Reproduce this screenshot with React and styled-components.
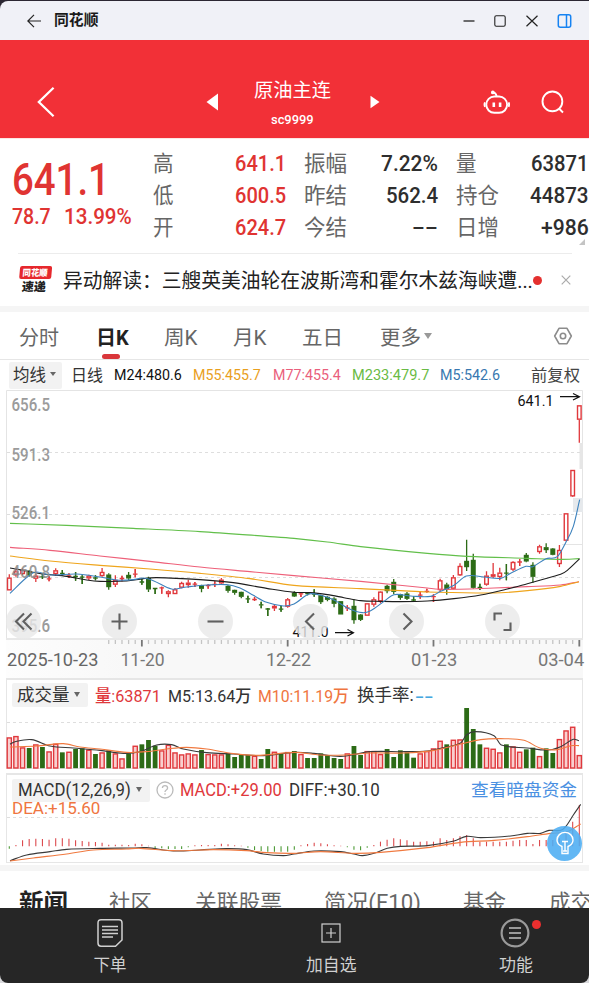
import React, { useLayoutEffect, useRef, useState } from "react";
import styled, { createGlobalStyle } from "styled-components";

const Global = createGlobalStyle`
  * { box-sizing: border-box; }
  body { margin: 0; background: #d9d9dc; overflow: hidden; }
`;

const FONT = '"Roboto", "Noto Sans CJK SC", sans-serif';

/* ---------- text that keeps a fixed advance width ---------- */

const LabelBox = styled.span`
  display: block;
  flex: none;
  width: ${(p) => p.$w}px;
  height: ${(p) => p.$size + 6}px;
  line-height: ${(p) => p.$size + 6}px;
  padding-top: 1px;
  margin-left: ${(p) => p.$ml || 0}px;
  font-family: ${FONT};
  font-size: ${(p) => p.$size}px;
  font-weight: ${(p) => p.$weight || 400};
  color: ${(p) => p.$color || "#333"};
  white-space: nowrap;
`;
const LabelInner = styled.span`
  display: inline-block;
  transform-origin: 0 50%;
`;

function Label({ w, size, weight, color, ml, children }) {
  const ref = useRef(null);
  const [scale, setScale] = useState(1);
  useLayoutEffect(() => {
    const n = ref.current.offsetWidth;
    if (n) setScale(w / n);
  }, [w, children]);
  return (
    <LabelBox $w={w} $size={size} $weight={weight} $color={color} $ml={ml}>
      <LabelInner ref={ref} style={{ transform: `scaleX(${scale})` }}>{children}</LabelInner>
    </LabelBox>
  );
}

/* ---------- window and header ---------- */

const Screen = styled.div`
  width: 589px;
  height: 983px;
  display: flex;
  flex-direction: column;
  background: #fff;
  overflow: hidden;
  border-radius: 0 0 8px 8px;
`;
const Desktop = styled.div`
  background: #2b2733;
  height: 40px;
  padding-top: 1px;
  flex: none;
`;
const TitleBar = styled.div`
  height: 39px;
  display: flex;
  align-items: center;
  background: #f0f1f7;
  border-radius: 8px 0 0 0;
  padding: 0 17px 0 27px;
`;
const WindowButtons = styled.div`
  margin-left: auto;
  display: flex;
  align-items: center;
  gap: 18px;
`;
const Header = styled.header`
  height: 98px;
  flex: none;
  display: flex;
  align-items: center;
  background: #f23037;
  padding: 25px 24px 0 36px;
`;
const NameBlock = styled.div`
  display: flex;
  flex-direction: column;
  align-items: center;
  gap: 7px;
  width: 79px;
  margin: 0 38px 0 36px;
  padding-top: 3px;
`;
const IconSlot = styled.span`
  display: flex;
  flex: none;
  margin-left: ${(p) => p.$ml || 0}px;
  margin-top: ${(p) => p.$mt || 0}px;
`;

/* ---------- quote ---------- */

const Quote = styled.section`
  height: 115px;
  flex: none;
  display: flex;
  border-top: 1px solid #fde6e3;
  position: relative;
`;
const Price = styled.div`
  flex: none;
  width: 153px;
  padding: 14px 0 0 12px;
`;
const Change = styled.div`
  display: flex;
  margin-top: -2px;
`;
const StatColumn = styled.div`
  width: ${(p) => p.$w}px;
  margin-right: 18px;
  padding-top: 8px;
  flex: none;
  &:nth-child(4) {
    margin-right: 0;
  }
`;
const StatRow = styled.div`
  height: 32px;
  display: flex;
  align-items: center;
  justify-content: space-between;
`;
const Corner = styled.i`
  position: absolute;
  right: 4px;
  bottom: 8px;
  border-left: 6px solid transparent;
  border-bottom: 6px solid #c4c4c4;
`;
const News = styled.section`
  height: 53px;
  flex: none;
  display: flex;
  align-items: center;
  margin: 0 17px 0 18px;
  border-top: 1px solid #ececec;
`;
const Logo = styled.div`
  width: 33px;
  height: 28px;
  flex: none;
  display: flex;
  flex-direction: column;
  align-items: center;
  transform: skewX(-5deg);
`;
const LogoTop = styled.div`
  width: 32px;
  height: 13px;
  flex: none;
  margin-bottom: -2px;
  background: #e6282d;
  border-radius: 2px;
  display: flex;
  justify-content: center;
  align-items: center;
`;
const Dot = styled.i`
  width: 9px;
  height: 9px;
  flex: none;
  border-radius: 50%;
  background: #e4302f;
`;
const Band = styled.div`
  height: 6px;
  flex: none;
  background: #f5f5f5;
`;

/* ---------- tabs ---------- */

const Tabs = styled.nav`
  height: 48px;
  flex: none;
  display: flex;
  align-items: center;
  padding: 2px 0 0 19px;
  border-bottom: 1px solid #e6e6e6;
`;
const Tab = styled.div`
  position: relative;
  margin-right: ${(p) => p.$gap}px;
`;
const Underline = styled.i`
  position: absolute;
  left: 6px;
  bottom: -9px;
  width: 18px;
  height: 5px;
  border-radius: 2.5px;
  background: #d9363a;
`;
const Caret = styled.i`
  flex: none;
  margin-left: ${(p) => p.$ml}px;
  margin-top: -2px;
  border: ${(p) => p.$s}px solid transparent;
  border-top: ${(p) => p.$s * 1.4}px solid ${(p) => p.$c || "#666"};
  border-bottom: 0;
`;
const Picker = styled.div`
  display: flex;
  align-items: center;
  flex: none;
  width: ${(p) => p.$w}px;
  height: ${(p) => p.$h}px;
  padding-left: ${(p) => p.$pad}px;
  background: #f2f2f2;
  border-radius: 2px;
`;
const AverageRow = styled.div`
  height: 30px;
  flex: none;
  display: flex;
  align-items: center;
  padding-left: 9px;
`;

/* ---------- charts ---------- */

const ChartArea = styled.div`
  position: relative;
  height: 250px;
  flex: none;
`;
const ChartSvg = styled.svg`
  display: block;
  font-family: ${FONT};
`;
const RoundButton = styled.button`
  position: absolute;
  left: ${(p) => p.$x - 17.5}px;
  top: 214px;
  width: 35px;
  height: 35px;
  padding: 0;
  border: 0;
  border-radius: 50%;
  background: rgba(233, 233, 233, 0.8);
  display: flex;
  align-items: center;
  justify-content: center;
`;
const DateAxis = styled.div`
  height: 38px;
  flex: none;
  margin-left: 6px;
  width: 577px;
  background: linear-gradient(90deg, #fdfdfd 0, #f8f8f8 120px);
`;
const DateLabels = styled.div`
  display: flex;
  padding-left: 0.5px;
`;
const Panel = styled.section`
  position: relative;
  width: 577px;
  height: ${(p) => p.$h}px;
  margin: 0 0 ${(p) => p.$mb}px 6px;
  flex: none;
  border: 1px solid #e6e6e6;
  border-top-width: 2px;
`;
const PanelHead = styled.div`
  display: flex;
  align-items: center;
  height: 30px;
  padding-left: 5px;
`;
const PanelChart = styled.div`
  position: absolute;
  left: -7px;
  top: ${(p) => p.$top}px;
`;
const DeaLine = styled.div`
  padding-left: 5px;
  margin-top: -9px;
`;
const Bulb = styled.button`
  position: absolute;
  right: 0;
  top: 51px;
  width: 35px;
  height: 35px;
  padding: 0;
  border: 0;
  border-radius: 50%;
  background: rgba(76, 173, 243, 0.88);
  display: flex;
  align-items: center;
  justify-content: center;
`;

/* ---------- bottom ---------- */

const SubTabs = styled.nav`
  height: 37px;
  flex: none;
  display: flex;
  align-items: center;
  padding: 0 0 0 19px;
  overflow: hidden;
`;
const SubTabsInner = styled.div`
  display: flex;
  align-items: center;
  height: 64px;
  margin-top: 25px;
`;
const BottomBar = styled.footer`
  height: 75px;
  flex: none;
  background: #262626;
  display: flex;
  padding-left: 70px;
`;
const NavItem = styled.button`
  position: relative;
  width: 80px;
  margin-right: ${(p) => p.$gap}px;
  padding: 7px 0 0;
  border: 0;
  background: none;
  display: flex;
  flex-direction: column;
  align-items: center;
`;
const NavIcon = styled.span`
  height: 36px;
  display: flex;
  align-items: center;
  margin-bottom: 3px;
`;
const Badge = styled.i`
  position: absolute;
  left: 57px;
  top: 12px;
  width: 9px;
  height: 9px;
  border-radius: 50%;
  background: #ea2f2f;
`;

/* ---------- data ---------- */

const RED = "#e0383c";
const GREEN = "#2c6b16";
const STEP = 6.628;
const xAt = (i) => 9.3 + i * STEP;

// colour, body top, body bottom, high, low (in thirds of a pixel)
const CANDLES = `r 269 307 259 307;r 250 262 240 266;r 246 258 240 262;g 250 262 246 266;r 263 272 258 282;g 265 268 258 273;r 271 274 265 280;r 247 258 241 264;g 254 258 246 262;r 262 266 256 270;g 264 267 252 278;g 266 269 262 288;r 263 271 260 276;g 267 273 262 277;r 252 264 240 266;g 260 297 256 305;r 276 290 262 297;r 270 273 263 280;g 261 271 252 276;r 256 261 243 268;g 281 283 272 290;g 270 304 266 312;g 300 303 300 318;r 298 301 296 317;r 310 318 307 328;r 304 318 300 318;r 285 299 281 301;r 284 291 275 299;r 287 290 282 297;g 292 302 290 313;r 291 295 289 302;r 287 291 280 297;r 275 286 270 288;g 294 308 292 314;g 306 314 305 320;g 312 326 311 331;g 331 334 323 345;r 332 337 327 339;g 348 353 341 361;g 362 364 360 384;r 354 361 348 369;g 362 365 353 371;r 334 356 330 359;g 315 325 310 327;r 315 320 313 327;g 315 319 313 322;g 316 320 304 326;g 322 342 320 348;g 327 335 325 340;g 332 347 328 358;g 340 379 340 379;r 357 362 352 369;g 354 396 334 407;g 380 395 378 399;r 346 383 346 383;r 334 350 328 356;r 311 340 310 346;g 294 309 290 316;g 282 311 273 319;g 319 329 317 335;g 317 332 312 336;g 334 338 325 339;r 320 323 312 332;r 307 313 302 314;r 323 329 319 342;r 277 306 272 311;g 290 305 284 320;r 268 302 261 304;r 234 262 226 264;g 219 237 155 249;g 216 299 197 302;g 297 300 287 306;r 263 290 250 293;r 259 266 225 270;r 254 267 239 277;g 254 257 228 277;r 222 245 220 249;r 220 224 213 234;g 201 220 195 223;g 231 266 223 284;r 175 192 170 197;g 178 186 166 195;g 182 200 180 202;r 186 228 171 237;r 76 158 76 160;r -54 25 -54 27;r -248 -205 -248 -136`
  .split(";")
  .map((s) => {
    const [c, ...n] = s.split(" ");
    return [c, ...n.map((v) => 488 + v / 3)];
  });

const VOLUMES = "r187 r183 r217 g219 r208 g216 r229 r206 g232 r230 g222 g220 r224 g237 r232 g226 r235 r250 g235 r212 g208 g195 g212 r226 r209 r232 r238 r235 r238 g225 r237 r238 r238 g235 g246 g240 g240 r242 g252 g222 r230 g236 r231 g228 r237 g249 g249 g235 g240 g249 g252 r235 g213 g240 r228 r228 r237 g222 g246 g226 g232 g248 r235 r228 r220 r197 g208 r194 r193 g99 g162 g208 r218 r221 r232 g208 r214 r230 g223 g218 r243 g220 g234 r192 r166 r155 r240"
  .split(" ")
  .map((s) => [s[0], 675 + Number(s.slice(1)) / 3]);

const MACD = [521, 510, 496, 492, 491, 492, 494, 490, 490, 491, 496, 498, 500, 501, 503, 509, 509, 509, 510, 506, 508, 512, 520, 520, 522, 522, 522, 517, 511, 510, 510, 510, 506, 508, 511, 512, 518, 525, 528, 530, 530, 530, 530, 524, 511, 507, 503, 505, 508, 511, 512, 517, 524, 526, 518, 510, 500, 494, 490, 493, 496, 500, 500, 499, 500, 490, 495, 490, 484, 480, 490, 500, 500, 500, 500, 500, 497, 495, 495, 507, 495, 495, 495, 490, 470, 440, 390];

// Each polyline has a left half and a right half; the right one starts 882 units in.
const curve = (base, left, right) => {
  const read = (s, dx) =>
    s.split(" ").map((p) => {
      const [x, y] = p.split(",").map(Number);
      return [(x + dx) / 3, base + y / 3];
    });
  const pts = [...read(left, 0), ...read(right, 882)];
  let d = `M${pts[0][0]} ${pts[0][1]}`;
  for (let i = 0; i < pts.length - 1; i++) {
    const a = pts[Math.max(0, i - 1)], b = pts[i], c = pts[i + 1], e = pts[Math.min(pts.length - 1, i + 2)];
    const k = (c[0] - b[0]) / 3;
    const s1 = (c[1] - a[1]) / (c[0] - a[0]);
    const s2 = (e[1] - b[1]) / (e[0] - b[0]);
    d += `C${b[0] + k} ${b[1] + k * s1} ${c[0] - k} ${c[1] - k * s2} ${c[0]} ${c[1]}`;
  }
  return d;
};

const PRICE_LINES = [
  ["#62bf4a", curve(488, "30,106 200,112 400,121 600,131 800,145", "0,151 100,162 200,176 400,196 520,205 700,211 800,214 855,212")],
  ["#ee6079", curve(488, "30,178 150,187 300,204 450,220 600,237 750,251", "0,263 200,280 400,300 450,304 600,300 700,296 800,291 855,281")],
  ["#efa51c", curve(488, "30,204 150,219 300,232 450,243 600,256 750,272", "0,292 200,302 320,308 400,312 600,315 700,308 800,295 855,281")],
  ["#1e1e1e", curve(488, "30,240 70,247 130,258 200,265 260,276 300,280 380,279 430,272 470,269 600,275 700,284 800,301", "0,313 50,314 100,320 150,329 200,338 260,340 320,341 400,339 480,332 560,321 640,303 700,287 740,276 800,259 820,247 857,212")],
  ["#3c82bd", curve(488, "30,316 85,264 110,252 150,261 230,258 300,267 350,276 400,275 430,270 460,278 515,303 560,297 620,291 680,290 720,300 760,322 800,343 850,354", "0,348 45,318 80,322 120,336 165,362 205,374 230,368 270,340 300,320 350,324 410,325 440,310 480,292 517,264 570,267 620,271 650,256 696,235 716,236 756,212 790,206 815,164 838,115 857,35")],
];
const VOLUME_LINES = [
  ["#3a3a3a", curve(675, "30,208 45,200 95,194 150,213 220,219 300,226 370,235 420,230 470,210 515,209 550,222 620,233 700,237 790,242", "0,232 60,235 140,244 230,230 330,230 400,228 440,220 500,204 517,180 545,170 600,182 622,210 700,219 760,225 800,215 838,193 855,197")],
  ["#f0793f", curve(675, "30,216 110,213 190,206 240,216 300,222 380,232 440,230 500,222 560,217 620,222 700,236 780,241", "0,232 80,240 150,240 230,234 330,234 420,226 500,207 560,194 620,191 690,196 740,220 790,224 830,212 855,212")],
];
const MACD_LINES = [
  ["#3a3a3a", curve(675, "30,557 80,540 150,530 200,523 300,520 400,519 440,518 520,528 600,525 680,521 740,524 790,537 850,542", "0,537 60,528 140,530 180,537 205,542 240,535 280,520 320,514 400,512 480,498 517,484 560,488 650,483 700,475 740,475 765,466 800,466 815,455 838,420 860,388")],
  ["#f0793f", curve(675, "30,558 100,549 200,537 280,525 380,522 420,520 520,527 640,524 740,527 800,533", "0,535 80,530 180,535 260,532 400,518 500,502 600,496 700,485 770,475 820,470 860,447")],
];

const Lines = ({ lines }) =>
  lines.map(([c, d]) => <path key={c} d={d} fill="none" stroke={c} strokeWidth="1.1" />);

const Dashes = ({ y }) => (
  <path d={`M7 ${y}H582`} stroke="#dedede" strokeWidth="1" strokeDasharray="3 3" />
);

function PriceChart() {
  const scale = [["656.5", 411], ["591.3", 461], ["526.1", 519.3], ["460.8", 578.3], ["395.6", 631.8]];
  return (
    <ChartSvg width="589" height="250" viewBox="0 390 589 250">
      <path d="M6.5 640V390.5H582.5V640" fill="none" stroke="#e4e4e4" />
      <path d="M6 639H583" stroke="#e8e8e8" strokeWidth="2" />
      <rect x="579.5" y="443" width="3.5" height="26" fill="#e6e6e6" />
      <rect x="573" y="498" width="10" height="14" fill="#e6e9ec" />
      <path d="M562 544.5H582" stroke="#e4e4e4" />
      {[452.5, 514.5, 577.5].map((y) => <Dashes key={y} y={y} />)}
      {CANDLES.map(([c, t, b, h, l], i) => {
        const x = xAt(i);
        const red = c === "r";
        const big = b - t > 2.2;
        return (
          <g key={i} stroke={red ? RED : GREEN} fill={red ? "#fff" : GREEN}>
            <path d={`M${x} ${h}V${t}M${x} ${b}V${l}`} strokeWidth="1.3" />
            {big ? (
              <rect x={x - 1.8} y={t + 0.5} width="3.6" height={b - t - 1} strokeWidth="1.4" />
            ) : (
              <path d={`M${x - 2.3} ${(t + b) / 2}h4.6M${x} ${h}V${l}`} strokeWidth="1.3" />
            )}
          </g>
        );
      })}
      <Lines lines={PRICE_LINES} />
      <g fill="#8e8e8e" fontSize="17.5" fontWeight="500" opacity="0.88">
        {scale.map(([s, y]) => (
          <text key={s} x="11.5" y={y} textLength="38.5" lengthAdjust="spacingAndGlyphs">{s}</text>
        ))}
      </g>
      <g fill="#111" fontSize="15">
        <text x="517.5" y="405.8" textLength="36" lengthAdjust="spacingAndGlyphs">641.1</text>
        <text x="292.5" y="636.5" textLength="36" lengthAdjust="spacingAndGlyphs">411.0</text>
      </g>
      <path d="M560 396.7H579M573 393.5L579.5 396.7L573 400M335 632.7H353M347.5 629.5L353.5 632.7L347.5 636" fill="none" stroke="#111" strokeWidth="1.2" />
    </ChartSvg>
  );
}

const TICKS = Array.from({ length: 72 }, (_, i) => i + 15);
const AxisTicks = () => (
  <ChartSvg width="577" height="8" viewBox="6 640 577 8">
    {TICKS.map((i) => {
      const major = [20, 42, 64, 86].includes(i);
      return (
        <path key={i} d={`M${xAt(i)} 640V${major ? 646.5 : 644}`} stroke={major ? "#777" : "#c4c4c4"} strokeWidth={major ? 1.8 : 1.3} />
      );
    })}
  </ChartSvg>
);

const VolumeChart = () => (
  <ChartSvg width="589" height="63" viewBox="0 706 589 63">
    <Dashes y={722.5} />
    {VOLUMES.map(([c, t], i) =>
      c === "r" ? (
        <rect key={i} x={xAt(i) - 2.1} y={t + 0.6} width="4.2" height={767.4 - t} fill="#f9cfcf" stroke={RED} strokeWidth="1.4" />
      ) : (
        <rect key={i} x={xAt(i) - 2.4} y={t} width="4.8" height={768.2 - t} fill={GREEN} />
      )
    )}
    <Lines lines={VOLUME_LINES} />
  </ChartSvg>
);

const MacdChart = () => (
  <ChartSvg width="589" height="62" viewBox="0 801 589 62">
    <Dashes y={817.5} />
    {MACD.map((v, i) => (
      <path key={i} d={`M${xAt(i)} 846.3V${675 + v / 3}`} stroke={v < 514 ? "#dc4a4e" : "#4c9a35"} strokeWidth="1.1" />
    ))}
    <Lines lines={MACD_LINES} />
  </ChartSvg>
);

/* ---------- icons ---------- */

const Svg = ({ w, h, c = "#555", sw = 2, children, ...rest }) => (
  <svg width={w} height={h} viewBox={`0 0 ${w} ${h}`} fill="none" stroke={c} strokeWidth={sw} {...rest}>
    {children}
  </svg>
);

const CHART_BUTTONS = [
  ["后退", 23.5, "M10 1.5L2 9.5L10 17.5M17.5 1.5L9.5 9.5L17.5 17.5"],
  ["放大", 119.3, "M9.5 1.5V17.5M1.5 9.5H17.5"],
  ["缩小", 215, "M1.5 9.5H17.5"],
  ["向左", 310.5, "M13 1.5L5 9.5L13 17.5"],
  ["向右", 406.6, "M6.5 1.5L14.5 9.5L6.5 17.5"],
  ["全屏", 502.3, "M1.5 8.5V1.5H9M10.5 18H17.5V10.5"],
];

const AVERAGES = [
  ["M24:480.6", 68, 11, "#111"],
  ["M55:455.7", 68, 11, "#e9a01e"],
  ["M77:455.4", 68, 12, "#ea5f7c"],
  ["M233:479.7", 77, 11, "#6abb45"],
  ["M5:542.6", 60, 11, "#3878b0"],
];

const STATS = [
  [133, [["高", 21, "641.1", 51, 1], ["低", 21, "600.5", 51, 1], ["开", 21, "624.7", 51, 1]]],
  [134, [["振幅", 43, "7.22%", 57, 0], ["昨结", 43, "562.4", 52, 0], ["今结", 43, "--", 26, 0]]],
  [133, [["量", 21, "63871", 58, 0], ["持仓", 43, "44873", 59, 0], ["日增", 43, "+986", 48, 0]]],
];

export default function App() {
  return (
    <Screen>
      <Global />
      <Desktop>
        <TitleBar>
          <Svg w={14} h={14} c="#222" sw={1.2}><path d="M14 7H1M7 .8L.8 7L7 13.2" /></Svg>
          <Label w={45} size={14.5} weight={700} color="#1a1a1a" ml={13}>同花顺</Label>
          <WindowButtons>
            <Svg w={12} h={12} c="#222" sw={1.3}><path d="M.5 6H11.5" /></Svg>
            <Svg w={14} h={12} c="#222" sw={1.1}><rect x="1.8" y=".8" width="10.4" height="10.4" rx="1.5" /></Svg>
            <Svg w={14} h={12} c="#222" sw={1.2}><path d="M1.5 .8L12.5 11.2M12.5 .8L1.5 11.2" /></Svg>
            <Svg w={15} h={14} c="#1683f2" sw={1.5}><rect x="1.3" y=".8" width="12.4" height="12.4" rx="2" /><path d="M9.5 1V13" /></Svg>
          </WindowButtons>
        </TitleBar>
      </Desktop>

      <Header>
        <Svg w={20} h={32} c="#fff" sw={2.4}><path d="M18.5 1L3 16L18.5 31" /></Svg>
        <IconSlot $ml={151}>
          <svg width="12" height="18" viewBox="0 0 12 18"><path d="M.5 9L12 .5V17.5Z" fill="#fff" /></svg>
        </IconSlot>
        <NameBlock>
          <Label w={77} size={19} color="#fff">原油主连</Label>
          <Label w={43} size={13.5} weight={500} color="#fff">sc9999</Label>
        </NameBlock>
        <IconSlot $ml={1}><svg width="10" height="14" viewBox="0 0 10 14"><path d="M9.5 7L.5 .7V13.3Z" fill="#fff" /></svg></IconSlot>
        <IconSlot $ml={103}>
          <Svg w={28} h={26} c="#fff" sw={1.9}>
            <rect x="3.3" y="7.5" width="20.8" height="16.3" rx="8" />
            <path d="M2 13.3Q1 15.5 2 17.8M25.6 13.3Q26.6 15.5 25.6 17.8M13.6 7.5Q13 3.5 9.8 3.5" />
            <path d="M10.8 13.5V18M17.1 13.5V18" strokeWidth="2.6" />
            <circle cx="9.8" cy="3.4" r=".9" fill="#fff" />
          </Svg>
        </IconSlot>
        <IconSlot $ml={30}>
          <Svg w={24} h={24} c="#fff" sw={1.9}><circle cx="11.4" cy="11.4" r="9.9" /><path d="M18.2 18.8L22 22.5" /></Svg>
        </IconSlot>
      </Header>

      <Quote>
        <Price>
          <Label w={98} size={45} weight={500} color="#e03432">641.1</Label>
          <Change>
            <Label w={39} size={21.5} weight={500} color="#e03432">78.7</Label>
            <Label w={68} size={21.5} weight={500} color="#e03432" ml={13}>13.99%</Label>
          </Change>
        </Price>
        {STATS.map(([w, rows]) => (
          <StatColumn key={rows[0][0]} $w={w}>
            {rows.map(([name, nw, value, vw, up]) => (
              <StatRow key={name}>
                <Label w={nw} size={21.5} color="#666">{name}</Label>
                <Label w={vw} size={22} weight={500} color={up ? "#e03432" : "#2e2e2e"}>{value}</Label>
              </StatRow>
            ))}
          </StatColumn>
        ))}
        <Corner />
      </Quote>

      <News>
        <Logo>
          <LogoTop><Label w={25} size={9} weight={900} color="#fff">同花顺</Label></LogoTop>
          <Label w={24} size={12} weight={900} color="#222">速递</Label>
        </Logo>
        <Label w={470} size={20} color="#222" ml={12}>异动解读：三艘英美油轮在波斯湾和霍尔木兹海峡遭...</Label>
        <Dot />
        <IconSlot $ml={19}>
          <Svg w={10} h={10} c="#aaa" sw={1.2}><path d="M.7 .7L9.3 9.3M9.3 .7L.7 9.3" /></Svg>
        </IconSlot>
      </News>
      <Band />

      <Tabs>
        <Tab $gap={37}><Label w={40} size={20} color="#666">分时</Label></Tab>
        <Tab $gap={35}><Label w={33} size={20} weight={700} color="#222">日K</Label><Underline /></Tab>
        <Tab $gap={35}><Label w={34} size={20} color="#666">周K</Label></Tab>
        <Tab $gap={35}><Label w={34} size={20} color="#666">月K</Label></Tab>
        <Tab $gap={37}><Label w={41} size={20} color="#666">五日</Label></Tab>
        <Tab $gap={0}><Label w={41} size={20} color="#666">更多</Label></Tab>
        <Caret $ml={3} $s={4.5} $c="#999" />
        <IconSlot $ml={121} $mt={-2}>
          <Svg w={20} h={20} c="#8c8c8c" sw={1.6}><path d="M6 2.3H14L18.3 10L14 17.7H6L1.7 10Z" strokeLinejoin="round" /><circle cx="10" cy="10" r="2.7" /></Svg>
        </IconSlot>
      </Tabs>

      <AverageRow>
        <Picker $w={53} $h={27} $pad={4}>
          <Label w={33} size={16.5} color="#333">均线</Label>
          <Caret $ml={4} $s={3.5} />
        </Picker>
        <Label w={32} size={16} color="#333" ml={9}>日线</Label>
        {AVERAGES.map(([t, w, ml, c]) => (
          <Label key={t} w={w} size={15.5} weight={450} color={c} ml={ml}>{t}</Label>
        ))}
        <Label w={49} size={16} color="#444" ml={31}>前复权</Label>
      </AverageRow>

      <ChartArea>
        <PriceChart />
        {CHART_BUTTONS.map(([name, x, d]) => (
          <RoundButton key={name} aria-label={name} $x={x}>
            <Svg w={19} h={19} c="#606060" sw={2.1}><path d={d} /></Svg>
          </RoundButton>
        ))}
      </ChartArea>

      <DateAxis>
        <AxisTicks />
        <DateLabels>
          <Label w={91} size={17.5} weight={450} color="#666">2025-10-23</Label>
          <Label w={44} size={17.5} color="#777" ml={23}>11-20</Label>
          <Label w={45} size={17.5} color="#777" ml={101}>12-22</Label>
          <Label w={46} size={17.5} color="#777" ml={100}>01-23</Label>
          <Label w={46} size={17.5} color="#777" ml={81}>03-04</Label>
        </DateLabels>
      </DateAxis>

      <Panel $h={91} $mb={4}>
        <PanelHead>
          <Picker $w={76} $h={24} $pad={5}>
            <Label w={53} size={17.5} color="#333">成交量</Label>
            <Caret $ml={4} $s={3.7} />
          </Picker>
          <Label w={66} size={17} weight={450} color="#e0383c" ml={7}>量:63871</Label>
          <Label w={83} size={17} weight={450} color="#333" ml={7}>M5:13.64万</Label>
          <Label w={91} size={17} weight={450} color="#ef7540" ml={7}>M10:11.19万</Label>
          <Label w={57} size={17.5} color="#333" ml={8}>换手率:</Label>
          <Label w={19} size={17} weight={500} color="#45a7e0" ml={1}>--</Label>
        </PanelHead>
        <PanelChart $top={26}><VolumeChart /></PanelChart>
      </Panel>

      <Panel $h={90} $mb={2}>
        <PanelChart $top={26}><MacdChart /></PanelChart>
        <PanelHead>
          <Picker $w={138} $h={23} $pad={6}>
            <Label w={113} size={17.5} color="#333">MACD(12,26,9)</Label>
            <Caret $ml={5} $s={3.7} />
          </Picker>
          <IconSlot $ml={6}>
            <Svg w={18} h={18} c="#bbb" sw={1.3}><circle cx="9" cy="9" r="8" /><path d="M6.4 7Q6.4 4.6 9 4.6T11.6 7Q11.6 8.3 10 9.2Q9 9.8 9 11M9 12.3V13.8" /></Svg>
          </IconSlot>
          <Label w={102} size={17.5} color="#e0383c" ml={6}>MACD:+29.00</Label>
          <Label w={91} size={17.5} color="#333" ml={7}>DIFF:+30.10</Label>
          <Label w={106} size={17.5} color="#4a90e2" ml={91}>查看暗盘资金</Label>
        </PanelHead>
        <DeaLine><Label w={88} size={17} color="#ef7540">DEA:+15.60</Label></DeaLine>
        <Bulb aria-label="提示">
          <Svg w={20} h={26} c="#fff" sw={1.4}>
            <path d="M7 17.5V15.5Q2 13.3 2 9A8 7.6 0 0 1 18 9Q18 13.3 13 15.5V17.5V22.5H7V17.5M7 22.5H13M10 20V10.5M7 10.5H13M8 20H12" />
          </Svg>
        </Bulb>
      </Panel>
      <Band />

      <SubTabs>
        <SubTabsInner>
          <Label w={49} size={24} weight={700} color="#222">新闻</Label>
          <Label w={43} size={21.5} color="#666" ml={41}>社区</Label>
          <Label w={87} size={21.5} color="#666" ml={43}>关联股票</Label>
          <Label w={97} size={21.5} color="#666" ml={42}>简况(F10)</Label>
          <Label w={43} size={21.5} color="#666" ml={42}>基金</Label>
          <Label w={43} size={21.5} color="#666" ml={43}>成交</Label>
        </SubTabsInner>
      </SubTabs>

      <BottomBar>
        <NavItem $gap={141}>
          <NavIcon>
            <Svg w={26} h={28} c="#d0d0d0" sw={1.5}>
              <path d="M4 .8H22Q25 .8 25 4V21L18.5 27.2H4Q1 27.2 1 24V4Q1 .8 4 .8Z" />
              <path d="M5 7.5H21M5 11H21M5 14.5H21M5 18H16" />
            </Svg>
          </NavIcon>
          <Label w={33} size={16.5} color="#d0d0d0">下单</Label>
        </NavItem>
        <NavItem $gap={104}>
          <NavIcon>
            <Svg w={20} h={20} c="#d0d0d0" sw={1.2}><rect x="1" y="1" width="18" height="18" /><path d="M10 5V15M5 10H15" /></Svg>
          </NavIcon>
          <Label w={51} size={16.5} color="#d0d0d0">加自选</Label>
        </NavItem>
        <NavItem $gap={0}>
          <NavIcon>
            <Svg w={30} h={30} c="#9a9a9a" sw={2.2}><circle cx="15" cy="15" r="13.4" /><path d="M9 10H21M9 15H21M9 20H21" /></Svg>
          </NavIcon>
          <Label w={34} size={16.5} color="#d0d0d0">功能</Label>
          <Badge />
        </NavItem>
      </BottomBar>
    </Screen>
  );
}
